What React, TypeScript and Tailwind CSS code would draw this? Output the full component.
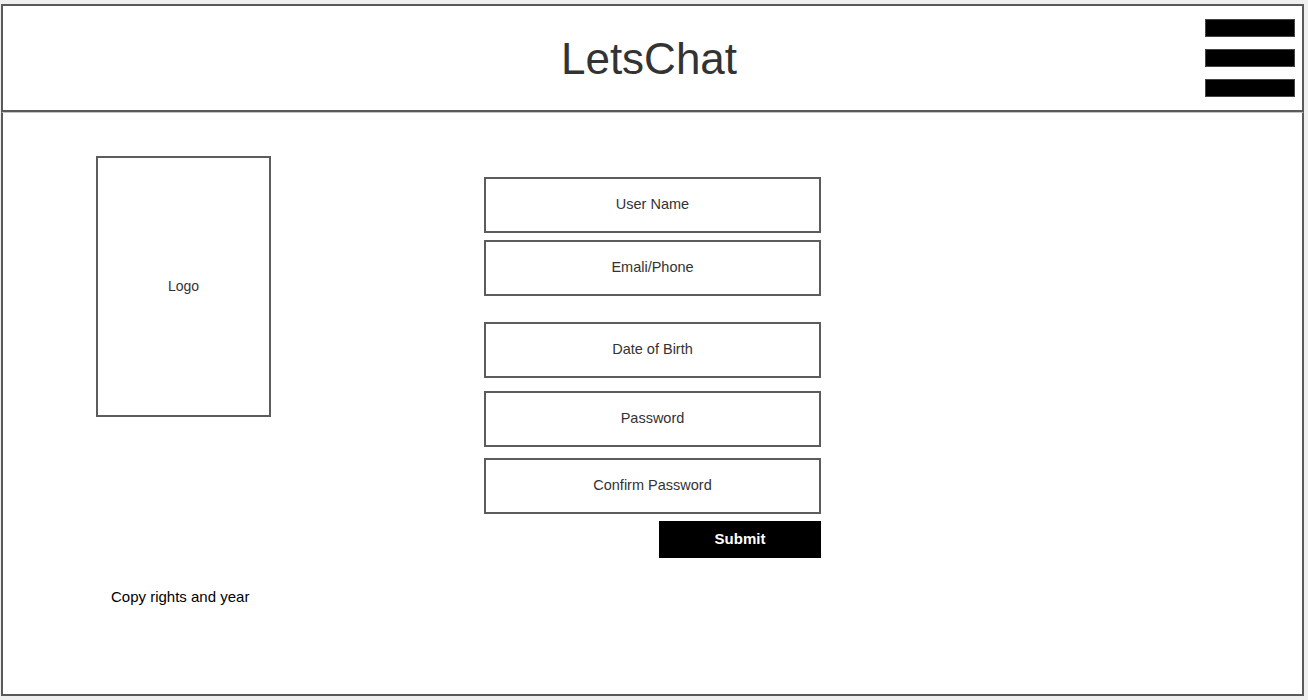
import React from "react";

const fields = [
  { label: "User Name", gap: "mt-0" },
  { label: "Emali/Phone", gap: "mt-[7px]" },
  { label: "Date of Birth", gap: "mt-[26px]" },
  { label: "Password", gap: "mt-[13px]" },
  { label: "Confirm Password", gap: "mt-[11px]" },
];

export default function App() {
  return (
    <div className="min-h-screen bg-[#efefef] pt-[4px] pl-[1px] font-['Liberation_Sans',Arial,sans-serif]">
      <div className="w-[1303px] h-[692px] flex flex-col bg-white">
        {/* Header */}
        <header className="h-[108px] shrink-0 border-2 border-[#595959] grid grid-cols-[1fr_auto_1fr] items-center pr-[7px]">
          <div />
          <h1 className="text-[44px] leading-none text-[#333] pt-[1px]">LetsChat</h1>
          <div className="flex justify-end">
            <div className="flex flex-col gap-[12px]">
              <span className="block w-[90px] h-[18px] bg-black border border-[#444]" />
              <span className="block w-[90px] h-[18px] bg-black border border-[#444]" />
              <span className="block w-[90px] h-[18px] bg-black border border-[#444]" />
            </div>
          </div>
        </header>

        {/* Body */}
        <main className="flex-1 border-x-2 border-b-2 border-[#595959] border-t border-t-[#c4c4c4] flex items-start pl-[93px]">
          {/* Left column */}
          <div className="flex flex-col pt-[43px]">
            <div className="w-[175px] h-[261px] border-2 border-[#5c5c5c] flex items-center justify-center text-[14px] text-[#333]">
              Logo
            </div>
            <p className="mt-[171px] ml-[15px] text-[15px] text-black leading-[18px]">Copy rights and year</p>
          </div>

          {/* Form */}
          <form className="ml-[213px] pt-[64px] w-[337px] flex flex-col">
            {fields.map((f) => (
              <div
                key={f.label}
                className={`${f.gap} h-[56px] border-2 border-[#5c5c5c] flex items-center justify-center text-[14.5px] text-[#333]`}
              >
                {f.label}
              </div>
            ))}
            <div className="mt-[7px] flex justify-end">
              <button
                type="button"
                className="w-[162px] h-[37px] bg-black text-white font-bold text-[15px]"
              >
                Submit
              </button>
            </div>
          </form>
        </main>
      </div>
    </div>
  );
}
